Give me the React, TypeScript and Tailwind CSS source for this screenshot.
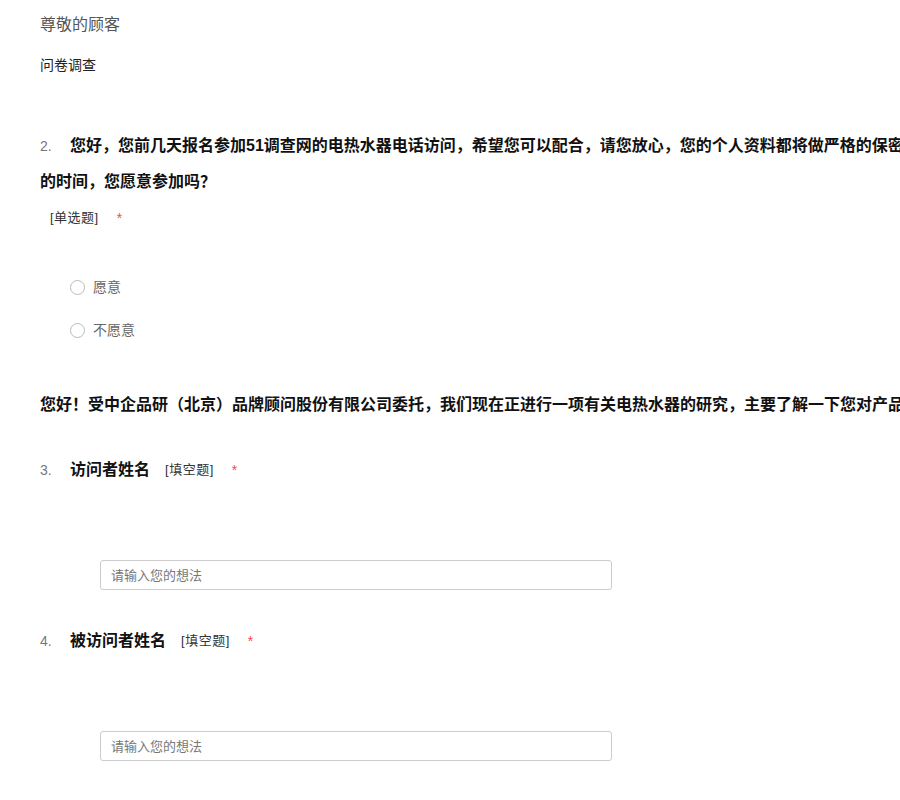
import React from 'react';

const font = { fontFamily: '"Liberation Sans", "Noto Sans CJK SC", sans-serif' };

const Required = ({ className = '' }: { className?: string }) => (
  <span className={`text-[#f44] text-[14px] ${className}`}>*</span>
);

const Radio = ({ label }: { label: string }) => (
  <label className="flex items-center h-[24px] ml-[30px] text-[14px] text-[#666] cursor-pointer">
    <span className="w-[15px] h-[15px] rounded-full border border-[#bbb] bg-white mr-[8px]" />
    {label}
  </label>
);

const TextInput = () => (
  <input
    type="text"
    placeholder="请输入您的想法"
    className="block ml-[60px] w-[512px] h-[30px] px-[10px] border border-[#ccc] rounded-[3px] text-[13px] text-[#333] placeholder:text-[#777] outline-none"
  />
);

const FillTitle = ({ num, title }: { num: number; title: string }) => (
  <div className="flex items-center h-[24px]">
    <span className="w-[30px] text-[14px] text-[#777]">{num}.</span>
    <span className="text-[16px] font-bold text-[#111]">{title}</span>
    <span className="ml-[15px] text-[13px] tracking-[0.5px] text-[#333]">[填空题]</span>
    <Required className="ml-[18px]" />
  </div>
);

export default function App() {
  return (
    <div className="w-[900px] h-[800px] overflow-hidden bg-white" style={font}>
      <div className="w-[1200px] pl-[40px] pt-[13px]">
        <div className="text-[16px] leading-[24px] text-[#555]">尊敬的顾客</div>
        <div className="mt-[18px] text-[14px] leading-[20px] text-[#222]">问卷调查</div>

        <div className="mt-[53px] text-[16px] leading-[36px] font-bold text-[#111]">
          <span className="inline-block w-[30px] text-[14px] font-normal text-[#777]">2.</span>
          您好，您前几天报名参加51调查网的电热水器电话访问，希望您可以配合，请您放心，您的个人资料都将做严格的保密处理，访问大约需要占用您10分钟
          <br />
          的时间，您愿意参加吗？
        </div>
        <div className="mt-[8px] ml-[10px] flex items-center h-[20px]">
          <span className="text-[13px] tracking-[0.5px] text-[#333]">[单选题]</span>
          <Required className="ml-[18px]" />
        </div>

        <div className="mt-[47px]">
          <Radio label="愿意" />
        </div>
        <div className="mt-[19px]">
          <Radio label="不愿意" />
        </div>

        <div className="mt-[51px] text-[16px] leading-[24px] font-bold text-[#111] whitespace-nowrap">
          您好！受中企品研（北京）品牌顾问股份有限公司委托，我们现在正进行一项有关电热水器的研究，主要了解一下您对产品的看法和意见，占用您一点时间。
        </div>

        <div className="mt-[41px]">
          <FillTitle num={3} title="访问者姓名" />
        </div>
        <div className="mt-[78px]">
          <TextInput />
        </div>

        <div className="mt-[39px]">
          <FillTitle num={4} title="被访问者姓名" />
        </div>
        <div className="mt-[78px]">
          <TextInput />
        </div>
      </div>
    </div>
  );
}
